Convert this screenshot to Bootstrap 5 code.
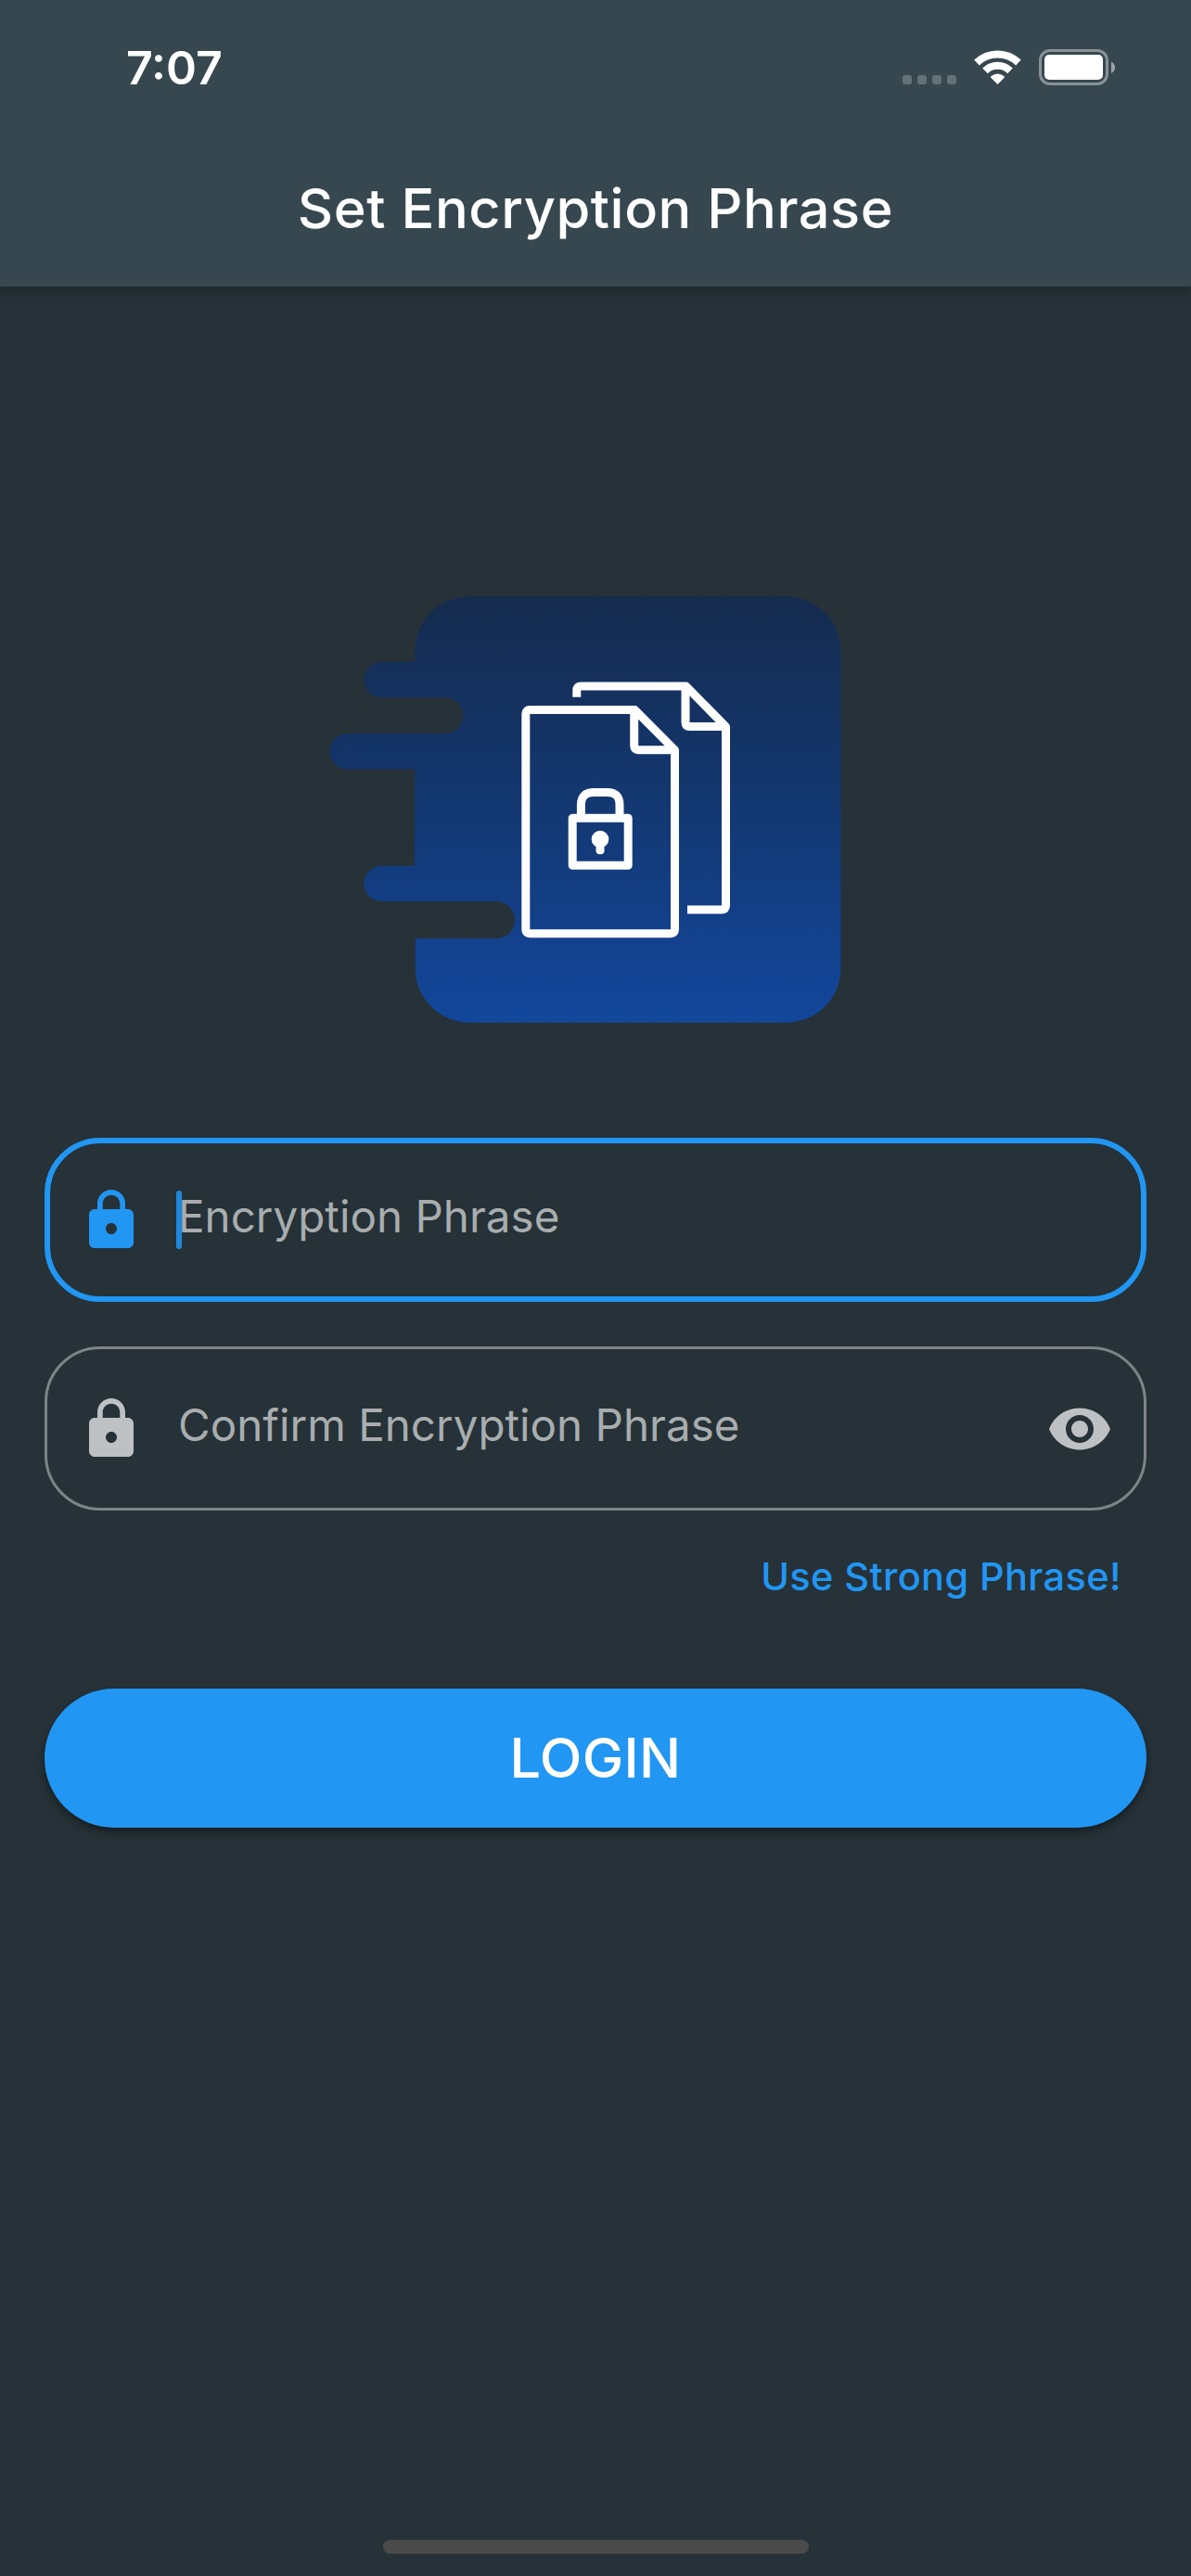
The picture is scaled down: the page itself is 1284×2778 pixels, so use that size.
<!DOCTYPE html>
<html lang="en">
<head>
<meta charset="utf-8">
<meta name="viewport" content="width=device-width, initial-scale=1">
<title>Set Encryption Phrase</title>
<link href="https://cdn.jsdelivr.net/npm/bootstrap@5.3.0/dist/css/bootstrap.min.css" rel="stylesheet">
<style>
  body { font-family: Inter, "Liberation Sans", sans-serif; background: #263238; color: #fff; }
  .screen { width: 1284px; height: 2778px; }
  .app-top { height: 309px; background: #37474f; box-shadow: 0 5px 12px rgba(0,0,0,.25); }
  .status { height: 141px; padding: 0 82px 0 136px; }
  .clock { font-size: 50px; font-weight: 600; line-height: 60px; letter-spacing: 0; margin-top: 43px; }
  .status-icons { margin-top: 52px; }
  .app-title { height: 168px; font-size: 59.5px; font-weight: 500; line-height: 166px; letter-spacing: .55px; }
  .logo-area { padding: 334px 0 0 354px; height: 918px; }
  .form-area { padding: 0 48px; }
  .phrase-field { height: 177px; border: 3px solid #7d8487; border-radius: 60px; color: #a8adaf; padding: 0 33px; }
  .phrase-field.active { border: 6px solid #2196f3; padding: 0 30px; }
  .phrase-field + .phrase-field { margin-top: 48px; }
  .field-icon { width: 72px; height: 72px; fill: #bec1c3; flex: none; margin-top: 1px; }
  .active .field-icon { fill: #2196f3; }
  .field-text { font-size: 47.5px; line-height: 60px; letter-spacing: .03px; margin: -7px 0 0 36px; white-space: nowrap; }
  .caret { width: 6px; height: 63px; border-radius: 3px; background: #2187d9; left: -2px; top: 2px; }
  .hint { font-size: 41.5px; font-weight: 500; line-height: 60px; letter-spacing: .38px; color: #2196f3; margin: 41px 27px 0 0; }
  .login { height: 150px; margin-top: 91px; border: 0; border-radius: 75px; background: #2196f3; color: #fff; font-size: 59.5px; font-weight: 500; letter-spacing: .3px; box-shadow: 0 6px 10px rgba(0,0,0,.3), 0 2px 4px rgba(0,0,0,.15); }
  .home-bar { width: 459px; height: 15px; border-radius: 8px; background: #4a4a4a; margin: 0 0 24px 413px; }
</style>
</head>
<body>
<div class="screen d-flex flex-column overflow-hidden">
  <header class="app-top flex-shrink-0">
    <div class="status d-flex justify-content-between align-items-start">
      <span class="clock">7:07</span>
      <svg class="status-icons" width="230" height="42" viewBox="972 52 230 42">
        <g fill="#657177">
          <rect x="973" y="81" width="10" height="10" rx="3"/><rect x="989" y="81" width="10" height="10" rx="3"/>
          <rect x="1005" y="81" width="10" height="10" rx="3"/><rect x="1021" y="81" width="10" height="10" rx="3"/>
        </g>
        <g fill="none" stroke="#fff" stroke-width="8">
          <path d="M1053 67.5A32.5 32.5 0 0 1 1098 67.5"/>
          <path d="M1062 76.3A19.5 19.5 0 0 1 1089 76.3"/>
        </g>
        <path d="M1075.5 91L1068.3 83.7Q1067.6 82.8 1068.6 82Q1075.5 76.8 1082.4 82Q1083.4 82.8 1082.7 83.7Z" fill="#fff"/>
        <rect x="1121.5" y="54.5" width="72" height="36" rx="10.5" fill="none" stroke="#879196" stroke-width="3"/>
        <rect x="1126" y="59" width="63" height="27" rx="5" fill="#fff"/>
        <path d="M1198 66.5Q1202 68.5 1202 72.7T1198 79Z" fill="#9ba3a7"/>
      </svg>
    </div>
    <h1 class="app-title text-center m-0">Set Encryption Phrase</h1>
  </header>

  <main class="flex-grow-1">
    <div class="logo-area">
      <svg class="d-block" width="553" height="460" viewBox="354 643 553 460">
        <defs>
          <linearGradient id="blue" x1="0" y1="0" x2="0" y2="1">
            <stop offset="0" stop-color="#152b4e"/><stop offset=".5" stop-color="#133872"/><stop offset=".94" stop-color="#134598"/><stop offset="1" stop-color="#12479b"/>
          </linearGradient>
        </defs>
        <path fill="url(#blue)" d="M506 643.3H848A58.5 58.5 0 0 1 906.4 701V1045A58.5 58.5 0 0 1 848 1102.7H506A58.5 58.5 0 0 1 447.7 1045V1012H535A20 20 0 0 0 535 972H411.500A19 19 0 0 1 411.500 933.700H447V829.500H373.500A19.300 19.300 0 0 1 373.500 791H480A19.200 19.200 0 0 0 480 752.300H411.500A19.300 19.300 0 0 1 411.500 713.700H447.300V701A58.500 58.500 0 0 1 506 643.300Z"/>
        <g fill="none" stroke="#fdfdfe" stroke-width="9" stroke-linejoin="round">
          <path d="M684.500 765.600H571.300Q566.800 765.600 566.800 770V1002.300Q566.800 1006.800 571.300 1006.800H723Q727.500 1006.800 727.500 1002.300V808.800Z"/>
          <path d="M683.700 765.600V804.300Q683.700 808.800 688.200 808.800H727.500"/>
          <path d="M621.800 751.700V744.300Q621.800 739.900 626.300 739.900H739.500L782.500 783.600V976.600Q782.500 981.100 778 981.100H741"/>
          <path d="M739 739.900V779.100Q739 783.600 743.500 783.600H782.500"/>
          <rect x="617.200" y="882.200" width="60" height="51"/>
          <path d="M626.400 882V868Q626.400 854.600 640 854.600H655Q668 854.600 668 868V882"/>
        </g>
        <circle cx="647" cy="905" r="9.300" fill="#fff"/>
        <rect x="642.500" y="905" width="9" height="16.300" rx="4" fill="#fff"/>
      </svg>
    </div>

    <form class="form-area">
      <div class="phrase-field active d-flex align-items-center">
        <svg class="field-icon" viewBox="0 0 24 24"><path d="M18 8h-1V6c0-2.760-2.240-5-5-5S7 3.240 7 6v2H6c-1.100 0-2 .9-2 2v10c0 1.100.9 2 2 2h12c1.100 0 2-.9 2-2V10c0-1.100-.9-2-2-2zm-6 9c-1.100 0-2-.9-2-2s.9-2 2-2 2 .9 2 2-.9 2-2 2zm3.100-9H8.900V6c0-1.710 1.390-3.100 3.100-3.100s3.100 1.390 3.100 3.100v2z"/></svg>
        <div class="field-text position-relative"><span class="caret position-absolute"></span><span class="position-relative">Encryption Phrase</span></div>
      </div>
      <div class="phrase-field d-flex align-items-center">
        <svg class="field-icon" viewBox="0 0 24 24"><path d="M18 8h-1V6c0-2.760-2.240-5-5-5S7 3.240 7 6v2H6c-1.100 0-2 .9-2 2v10c0 1.100.9 2 2 2h12c1.100 0 2-.9 2-2V10c0-1.100-.9-2-2-2zm-6 9c-1.100 0-2-.9-2-2s.9-2 2-2 2 .9 2 2-.9 2-2 2zm3.100-9H8.900V6c0-1.710 1.390-3.100 3.100-3.100s3.100 1.390 3.100 3.100v2z"/></svg>
        <div class="field-text">Confirm Encryption Phrase</div>
        <svg class="field-icon ms-auto" viewBox="0 0 24 24"><path d="M12 4.500C7 4.500 2.730 7.610 1 12c1.730 4.390 6 7.500 11 7.500s9.270-3.110 11-7.500c-1.730-4.390-6-7.500-11-7.500zM12 17c-2.760 0-5-2.240-5-5s2.240-5 5-5 5 2.240 5 5-2.240 5-5 5zm0-8c-1.660 0-3 1.340-3 3s1.340 3 3 3 3-1.340 3-3-1.340-3-3-3z"/></svg>
      </div>
      <div class="hint text-end">Use Strong Phrase!</div>
      <button type="button" class="login btn w-100 p-0 d-flex align-items-center justify-content-center">LOGIN</button>
    </form>
  </main>
  <div class="home-bar flex-shrink-0"></div>
</div>
<script src="https://cdn.jsdelivr.net/npm/bootstrap@5.3.0/dist/js/bootstrap.bundle.min.js"></script>
</body>
</html>
